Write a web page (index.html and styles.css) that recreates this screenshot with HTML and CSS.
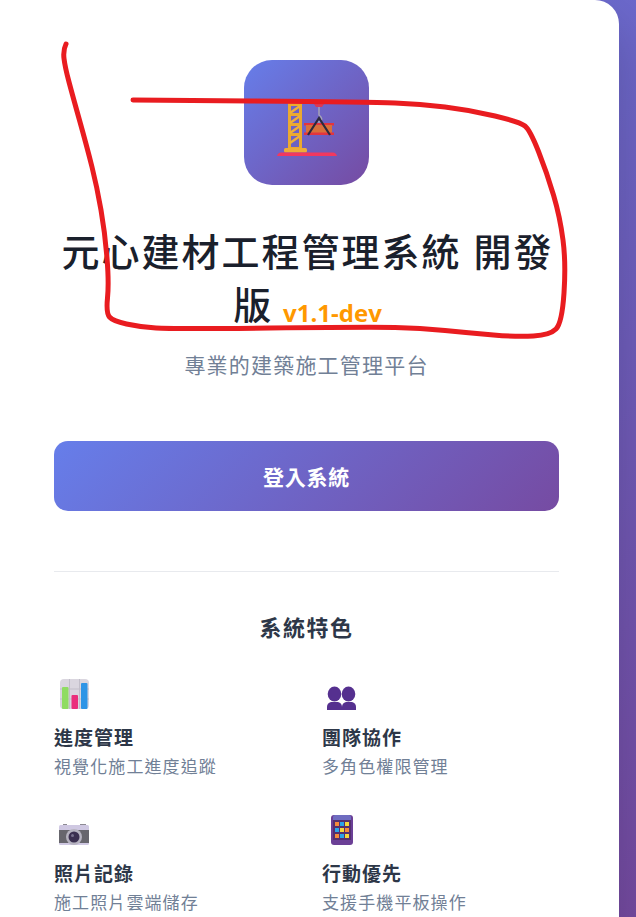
FILE: index.html
```html
<!DOCTYPE html>
<html lang="zh-Hant">
<head>
<meta charset="utf-8">
<title>元心建材工程管理系統</title>
<link rel="stylesheet" href="styles.css">
</head>
<body>
<main class="card">
  <div class="logo">
    <svg class="logo-art" viewBox="0 0 125 125" aria-hidden="true">
      <rect x="44" y="41" width="64" height="3" fill="#e9a83a"/>
      <rect x="44" y="41" width="14" height="48" fill="#eba92f"/>
      <path d="M47 46h8v7h-8zM47 56h8v7h-8zM47 66h8v7h-8zM47 76h8v11h-8z" fill="#6d62c4"/>
      <path d="M46 53l10-7M46 63l10-7M46 73l10-7M46 83l10-7" stroke="#eeb03a" stroke-width="2.400"/>
      <rect x="40" y="88" width="23" height="4.500" rx="1.500" fill="#eeac38"/>
      <path d="M33 96q1-3.500 4-3.500h52q3 0 4 3.500z" fill="#f2385f"/>
      <path d="M70 44h10l-2 3h-6z" fill="#d93a55"/>
      <path d="M75 47v8q4 3 2 6-2 2-4 0" fill="none" stroke="#a9a7b5" stroke-width="1.400"/>
      <rect x="60" y="63" width="30" height="2.500" fill="#e3343f"/>
      <rect x="62" y="65" width="26" height="8" fill="#d8703b"/>
      <rect x="60" y="72.500" width="30" height="2.500" fill="#e3343f"/>
      <path d="M64 75l11-17 11 17" fill="none" stroke="#2c2a3e" stroke-width="2.200"/>
    </svg>
  </div>
  <h1 class="title">元心建材工程管理系統 開發版 <span class="version">v1.1-dev</span></h1>
  <p class="subtitle">專業的建築施工管理平台</p>
  <button class="login" type="button">登入系統</button>
  <hr class="divider">
  <h2 class="features-title">系統特色</h2>
  <div class="features">
    <section class="feature">
      <svg class="feature-icon" viewBox="0 0 36 36" aria-hidden="true">
        <rect x="6" y="3" width="29" height="30" rx="4" fill="#dad6df"/>
        <path d="M15.500 3v30M25.500 3v30M6 13h29M6 23h29" stroke="#c2bec9" stroke-width="1"/>
        <rect x="8" y="11" width="6.500" height="22" rx="1" fill="#8fdc62"/>
        <rect x="17.500" y="19" width="6.500" height="14" rx="1" fill="#ea2f7c"/>
        <rect x="27" y="7" width="6.500" height="26" rx="1" fill="#2e95e6"/>
      </svg>
      <h3 class="feature-name">進度管理</h3>
      <p class="feature-desc">視覺化施工進度追蹤</p>
    </section>
    <section class="feature">
      <svg class="feature-icon" viewBox="0 0 36 36" aria-hidden="true">
        <g fill="#55308f">
          <ellipse cx="12.500" cy="18" rx="6.800" ry="7.500"/>
          <ellipse cx="26.500" cy="18" rx="6.800" ry="7.500"/>
          <path d="M5 34v-3q0-4 4-5h7q4 1 4 5v3z"/>
          <path d="M20 34v-3q0-4 4-5h6q4 1 4 5v3z"/>
        </g>
      </svg>
      <h3 class="feature-name">團隊協作</h3>
      <p class="feature-desc">多角色權限管理</p>
    </section>
    <section class="feature">
      <svg class="feature-icon" viewBox="0 0 36 36" aria-hidden="true">
        <path d="M9 13v-1h4v1zM26 13v-1h6v1z" fill="#8d8a94"/>
        <rect x="5" y="13" width="30" height="20" rx="1.500" fill="#cfc8e2"/>
        <rect x="5" y="18" width="30" height="13" fill="#67666d"/>
        <circle cx="20" cy="25" r="8" fill="#b6b3c0"/>
        <circle cx="20" cy="25" r="5.500" fill="#3b3050"/>
        <circle cx="18.500" cy="23.500" r="1.500" fill="#77708c"/>
      </svg>
      <h3 class="feature-name">照片記錄</h3>
      <p class="feature-desc">施工照片雲端儲存</p>
    </section>
    <section class="feature">
      <svg class="feature-icon" viewBox="0 0 36 36" aria-hidden="true">
        <rect x="9" y="3" width="22" height="30" rx="3" fill="#6b3f96"/>
        <path d="M11 5q0-2 2-2h14q2 0 2 2v4H11z" fill="#6f6cc0"/>
        <rect x="11" y="8" width="18" height="20" fill="#54306f"/>
        <g>
          <rect class="tile-o" x="13" y="10" width="4" height="4"/><rect class="tile-b" x="18" y="10" width="4" height="4"/><rect class="tile-y" x="23" y="10" width="4" height="4"/>
          <rect class="tile-b" x="13" y="16" width="4" height="4"/><rect class="tile-y" x="18" y="16" width="4" height="4"/><rect class="tile-o" x="23" y="16" width="4" height="4"/>
          <rect class="tile-o" x="13" y="22" width="4" height="4"/><rect class="tile-b" x="18" y="22" width="4" height="4"/><rect class="tile-y" x="23" y="22" width="4" height="4"/>
        </g>
      </svg>
      <h3 class="feature-name">行動優先</h3>
      <p class="feature-desc">支援手機平板操作</p>
    </section>
  </div>
</main>
<svg class="scribble" viewBox="0 0 636 917" aria-hidden="true">
  <path d="M66 44Q63 50 64 58.500Q65 67 69 82Q73 97 80 122Q87 147 92 167Q97 187 101 210Q105 233 107 258Q109 283 107.500 298Q106 313 109.500 317Q113 321 126.500 324Q140 327 156 328Q173 329 270 328Q370 327 395 327.500Q420 328 445 330.500Q470 333 493.500 335Q517 337 533.500 336Q550 335 556 329Q562 323 564 293Q566 263 563 240Q560 217 553.500 195Q547 173 538.500 151.500Q530 130 525 126Q520 122 495 116Q470 110 445 107Q420 104 395 103Q370 102 251 101L133 100"/>
</svg>
</body>
</html>
```
FILE: styles.css
```css
* { box-sizing: border-box; }
html, body { height: 100%; }
body {
  margin: 0;
  overflow: hidden;
  background: linear-gradient(135deg, #667eea 0%, #764ba2 100%);
  font-family: "Open Sans", "Noto Sans CJK TC", sans-serif;
  color: #1a202c;
}
.card {
  width: 619px;
  min-height: 100%;
  padding: 60px 60px 80px 54px;
  background: #fff;
  border-radius: 0 24px 0 0;
  box-shadow: 0 20px 60px rgba(0, 0, 0, 0.2);
}
.logo {
  width: 125px;
  height: 125px;
  margin: 0 auto 0;
  border-radius: 28px;
  background: linear-gradient(135deg, #667eea 0%, #764ba2 100%);
}
.logo-art { display: block; width: 125px; height: 125px; }
.title {
  margin: 40px 0 0;
  padding-left: 2px;
  font-size: 38px;
  line-height: 53px;
  font-weight: 500;
  letter-spacing: 2px;
  text-align: center;
}
.version {
  margin-left: -2px;
  font-size: 24px;
  line-height: 1;
  font-weight: 700;
  letter-spacing: 0;
  vertical-align: -3px;
  color: #ff9800;
}
.subtitle {
  margin: 16px 0 0;
  font-size: 21px;
  line-height: 36px;
  letter-spacing: 1.2px;
  text-align: center;
  color: #718096;
}
.login {
  display: block;
  width: 100%;
  height: 70px;
  margin: 58px 0 0;
  border: 0;
  border-radius: 14px;
  background: linear-gradient(135deg, #667eea 0%, #764ba2 100%);
  color: #fff;
  font: 600 21px "Open Sans", "Noto Sans CJK TC", sans-serif;
  letter-spacing: 0.8px;
}
.divider {
  height: 1px;
  margin: 60px 0 0;
  border: 0;
  background: #e8eaee;
}
.features-title {
  margin: 37px 0 0;
  font-size: 22px;
  line-height: 36px;
  font-weight: 600;
  letter-spacing: 1.5px;
  text-align: center;
  color: #2d3748;
}
.features {
  display: grid;
  grid-template-columns: 1fr 1fr;
  column-gap: 31px;
  row-gap: 30px;
  margin-top: 31px;
}
.feature-icon { display: block; width: 36px; height: 36px; }
.feature-name {
  margin: 11px 0 0;
  font-size: 19px;
  line-height: 30px;
  font-weight: 600;
  letter-spacing: 1px;
  color: #2d3748;
}
.feature-desc {
  margin: -1px 0 0;
  font-size: 17px;
  line-height: 30px;
  letter-spacing: 1.1px;
  color: #718096;
}
.tile-o { fill: #f58a3c; }
.tile-b { fill: #2aa5ea; }
.tile-y { fill: #f5d83c; }
.scribble {
  position: absolute;
  left: 0;
  top: 0;
  width: 636px;
  height: 917px;
  pointer-events: none;
}
.scribble path {
  fill: none;
  stroke: #e91c20;
  stroke-width: 5;
  stroke-linecap: round;
  stroke-linejoin: round;
}
```
